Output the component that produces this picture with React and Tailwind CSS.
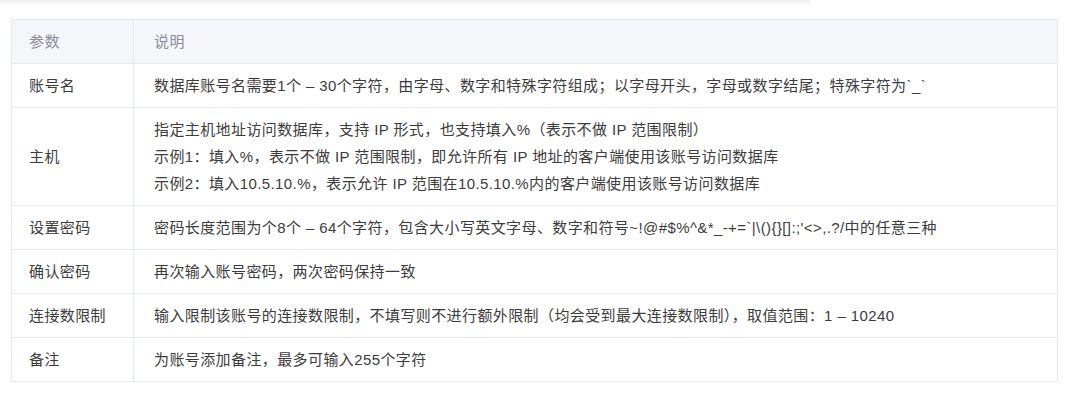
export default function App() {
  const rows = [
    { k: "账号名", v: ["数据库账号名需要1个 – 30个字符，由字母、数字和特殊字符组成；以字母开头，字母或数字结尾；特殊字符为`_`"] },
    {
      k: "主机",
      v: [
        "指定主机地址访问数据库，支持 IP 形式，也支持填入%（表示不做 IP 范围限制）",
        "示例1：填入%，表示不做 IP 范围限制，即允许所有 IP 地址的客户端使用该账号访问数据库",
        "示例2：填入10.5.10.%，表示允许 IP 范围在10.5.10.%内的客户端使用该账号访问数据库",
      ],
    },
    { k: "设置密码", v: ["密码长度范围为个8个 – 64个字符，包含大小写英文字母、数字和符号~!@#$%^&*_-+=`|\\(){}[]:;'<>,.?/中的任意三种"] },
    { k: "确认密码", v: ["再次输入账号密码，两次密码保持一致"] },
    { k: "连接数限制", v: ["输入限制该账号的连接数限制，不填写则不进行额外限制（均会受到最大连接数限制），取值范围：1 – 10240"] },
    { k: "备注", v: ["为账号添加备注，最多可输入255个字符"] },
  ];
  return (
    <div
      className="w-[1080px] h-[400px] bg-white overflow-hidden"
      style={{ fontFamily: '"Liberation Sans", "Noto Sans CJK SC", sans-serif' }}
    >
      <div className="h-[6px] w-[810px] bg-gradient-to-b from-[#eff0f1] to-white" />
      <div className="pt-[13px] pl-[11px]">
        <table className="w-[1047px] border-collapse text-[15px] tracking-[0.4px]">
          <thead>
            <tr className="bg-[#f4f6fa]">
              <th className="w-[122px] border border-[#e4e9f2] pl-[17px] pr-2 py-[8px] leading-[27px] text-left font-normal text-[#8a8e99]">参数</th>
              <th className="border border-[#e4e9f2] pl-[20px] pr-2 py-[8px] leading-[27px] text-left font-normal text-[#8a8e99]">说明</th>
            </tr>
          </thead>
          <tbody>
            {rows.map((r) => (
              <tr key={r.k}>
                <td className="border border-[#e4e9f2] pl-[17px] pr-2 py-[8px] leading-[27px] text-[#3c3c3c] align-middle">{r.k}</td>
                <td className="border border-[#e4e9f2] pl-[20px] pr-2 py-[8px] leading-[27px] text-[#3c3c3c]">
                  {r.v.map((line, i) => (
                    <div key={i}>{line}</div>
                  ))}
                </td>
              </tr>
            ))}
          </tbody>
        </table>
      </div>
    </div>
  );
}
